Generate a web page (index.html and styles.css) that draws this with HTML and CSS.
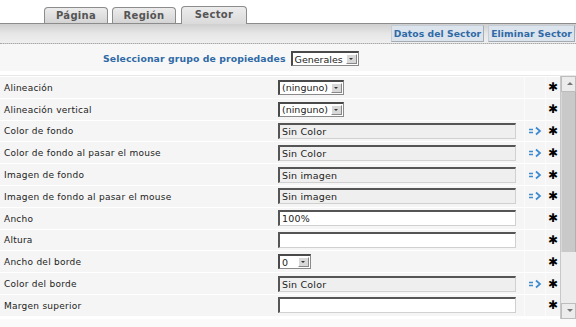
FILE: index.html
```html
<!DOCTYPE html>
<html lang="es">
<head>
  <meta charset="UTF-8" />
  <title>Propiedades del Sector</title>
  <link rel="stylesheet" href="styles.css">
</head>
<body>
  <div class="tabs">
    <div class="tab">Página</div>
    <div class="tab">Región</div>
    <div class="tab active">Sector</div>
  </div>

  <div class="toolbar">
    <button class="tool-btn">Datos del Sector</button>
    <button class="tool-btn">Eliminar Sector</button>
  </div>

  <div class="group-row">
    <span class="group-label">Seleccionar grupo de propiedades</span>
    <span class="select wide">Generales<i class="drop"></i></span>
  </div>

  <div class="panel">
    <div class="props">
      <div class="row">
        <div class="label">Alineación</div>
        <div class="field"><span class="select">(ninguno)<i class="drop"></i></span></div>
        <div class="pick"></div>
        <div class="req">&#10033;</div>
      </div>
      <div class="row">
        <div class="label">Alineación vertical</div>
        <div class="field"><span class="select">(ninguno)<i class="drop"></i></span></div>
        <div class="pick"></div>
        <div class="req">&#10033;</div>
      </div>
      <div class="row">
        <div class="label">Color de fondo</div>
        <div class="field"><input class="text readonly" type="text" value="Sin Color" readonly></div>
        <div class="pick"><svg viewBox="0 0 14 10"><path d="M1 3.5h4M1 6.5h4" /><path d="M8 1.5l4 3.5-4 3.5" /></svg></div>
        <div class="req">&#10033;</div>
      </div>
      <div class="row">
        <div class="label">Color de fondo al pasar el mouse</div>
        <div class="field"><input class="text readonly" type="text" value="Sin Color" readonly></div>
        <div class="pick"><svg viewBox="0 0 14 10"><path d="M1 3.5h4M1 6.5h4" /><path d="M8 1.5l4 3.5-4 3.5" /></svg></div>
        <div class="req">&#10033;</div>
      </div>
      <div class="row">
        <div class="label">Imagen de fondo</div>
        <div class="field"><input class="text readonly" type="text" value="Sin imagen" readonly></div>
        <div class="pick"><svg viewBox="0 0 14 10"><path d="M1 3.5h4M1 6.5h4" /><path d="M8 1.5l4 3.5-4 3.5" /></svg></div>
        <div class="req">&#10033;</div>
      </div>
      <div class="row">
        <div class="label">Imagen de fondo al pasar el mouse</div>
        <div class="field"><input class="text readonly" type="text" value="Sin imagen" readonly></div>
        <div class="pick"><svg viewBox="0 0 14 10"><path d="M1 3.5h4M1 6.5h4" /><path d="M8 1.5l4 3.5-4 3.5" /></svg></div>
        <div class="req">&#10033;</div>
      </div>
      <div class="row">
        <div class="label">Ancho</div>
        <div class="field"><input class="text" type="text" value="100%"></div>
        <div class="pick"></div>
        <div class="req">&#10033;</div>
      </div>
      <div class="row">
        <div class="label">Altura</div>
        <div class="field"><input class="text" type="text" value=""></div>
        <div class="pick"></div>
        <div class="req">&#10033;</div>
      </div>
      <div class="row">
        <div class="label">Ancho del borde</div>
        <div class="field"><span class="select small">0<i class="drop"></i></span></div>
        <div class="pick"></div>
        <div class="req">&#10033;</div>
      </div>
      <div class="row">
        <div class="label">Color del borde</div>
        <div class="field"><input class="text readonly" type="text" value="Sin Color" readonly></div>
        <div class="pick"><svg viewBox="0 0 14 10"><path d="M1 3.5h4M1 6.5h4" /><path d="M8 1.5l4 3.5-4 3.5" /></svg></div>
        <div class="req">&#10033;</div>
      </div>
      <div class="row">
        <div class="label">Margen superior</div>
        <div class="field"><input class="text" type="text" value=""></div>
        <div class="pick"></div>
        <div class="req">&#10033;</div>
      </div>
    </div>
    <div class="scrollbar">
      <div class="sb-btn up"></div>
      <div class="sb-thumb"></div>
      <div class="sb-track"></div>
      <div class="sb-btn down"></div>
    </div>
  </div>
  <div class="footer"></div>
</body>
</html>
```

FILE: styles.css
```css
body {
  margin: 0;
  background: #fff;
  font-family: "DejaVu Sans", Verdana, sans-serif;
  font-size: 9px;
  color: #222;
  overflow: hidden;
}
.tabs {
  display: flex;
  align-items: flex-end;
  gap: 4px;
  height: 23px;
  padding-left: 44px;
}
.tab {
  width: 62px;
  height: 15px;
  line-height: 15px;
  text-align: center;
  font-weight: bold;
  font-size: 10px;
  letter-spacing: 0.3px;
  color: #555;
  background: linear-gradient(#ececec, #d4d4d4);
  border: 1px solid #8c8c8c;
  border-bottom: none;
  border-radius: 4px 4px 0 0;
}
.tab.active {
  width: 64px;
  height: 17px;
  margin-left: 1px;
  margin-bottom: -1px;
  background: linear-gradient(#ececec, #dadada);
  position: relative;
}
.toolbar {
  display: flex;
  justify-content: flex-end;
  align-items: center;
  gap: 4px;
  height: 19px;
  padding-right: 1px;
  background: linear-gradient(#cfcfcf, #e6e6e6 50%, #efefef);
  border-top: 1px solid #8c8c8c;
  border-bottom: 1px dotted #a9a9a9;
}
.tool-btn {
  font-family: "DejaVu Sans", Verdana, sans-serif;
  font-size: 9.2px;
  font-weight: bold;
  letter-spacing: 0.1px;
  color: #2f6aa6;
  background: #dbe3ec;
  border: 1px solid #c4ccd6;
  border-right-color: #a4acb6;
  border-bottom-color: #a4acb6;
  height: 17px;
  padding: 0 2px;
  margin: 0;
}
.group-row {
  display: flex;
  align-items: center;
  gap: 5px;
  height: 25px;
  padding: 2px 0 0 103px;
  background: #f7f7f7;
  border-bottom: 4px solid #fff;
}
.group-label {
  font-weight: bold;
  font-size: 9.3px;
  letter-spacing: 0.1px;
  color: #2f6aa6;
}
.select {
  display: inline-flex;
  align-items: center;
  justify-content: space-between;
  box-sizing: border-box;
  width: 66px;
  height: 15px;
  padding: 0 1px 0 2px;
  background: #fff;
  border: 1px solid #8a8a8a;
  border-top: 2px solid #4a4a4a;
  border-left: 2px solid #4a4a4a;
  font-size: 9.5px;
  color: #222;
}
.select.wide {
  width: 68px;
  font-size: 9.5px;
}
.select.small {
  width: 33px;
}
.drop {
  width: 11px;
  height: 10px;
  box-sizing: border-box;
  background: #d8d8d8;
  border: 1px solid #fff;
  border-right-color: #888;
  border-bottom-color: #888;
  position: relative;
}
.drop::after {
  content: "";
  position: absolute;
  left: 2px;
  top: 3px;
  border-left: 2px solid transparent;
  border-right: 2px solid transparent;
  border-top: 2px solid #333;
}
.panel {
  display: flex;
  height: 243px;
  border-top: 1px solid #e8e8e8;
}
.props {
  flex: 1;
  padding-top: 1px;
}
.row {
  display: grid;
  grid-template-columns: 278px 246px 21px 15px;
  height: 21.8px;
  align-items: center;
  background: #f5f5f5;
  border-bottom: 1px solid #fff;
  box-sizing: border-box;
}
.label {
  padding: 1px 0 0 4px;
  letter-spacing: 0.25px;
}
.field,
.pick,
.req {
  height: 100%;
  display: flex;
  align-items: center;
}
.pick,
.req {
  justify-content: center;
  border-left: 1px solid #fbfbfb;
}
.text {
  box-sizing: border-box;
  width: 238px;
  height: 16px;
  margin: 0;
  padding: 0 2px;
  font-family: "DejaVu Sans", Verdana, sans-serif;
  font-size: 9.5px;
  letter-spacing: 0.2px;
  color: #222;
  background: #fff;
  border: 1px solid #d0d0d0;
  border-top: 2px solid #555;
  border-left: 2px solid #555;
}
.text.readonly {
  background: #efefef;
}
.pick svg {
  width: 14px;
  height: 10px;
  fill: none;
  stroke: #3c8ad2;
  stroke-width: 1.7;
}
.req {
  font-size: 12px;
  color: #000;
}
.scrollbar {
  width: 16px;
  display: flex;
  flex-direction: column;
  background: #e4e4e4;
  border-left: 1px solid #c8c8c8;
}
.sb-btn {
  height: 14px;
  background: #ececec;
  border: 1px solid #bdbdbd;
  position: relative;
}
.sb-btn::after {
  content: "";
  position: absolute;
  left: 5px;
  top: 5px;
  border-left: 3px solid transparent;
  border-right: 3px solid transparent;
}
.sb-btn.up::after {
  border-bottom: 3px solid #777;
}
.sb-btn.down::after {
  border-top: 3px solid #777;
}
.sb-thumb {
  height: 160px;
  background: #c9c9c9;
  border-left: 1px solid #d8d8d8;
  border-right: 1px solid #b0b0b0;
}
.sb-track {
  flex: 1;
  background: #ececec;
}
.footer {
  height: 9px;
  background: #fafafa;
}
```
